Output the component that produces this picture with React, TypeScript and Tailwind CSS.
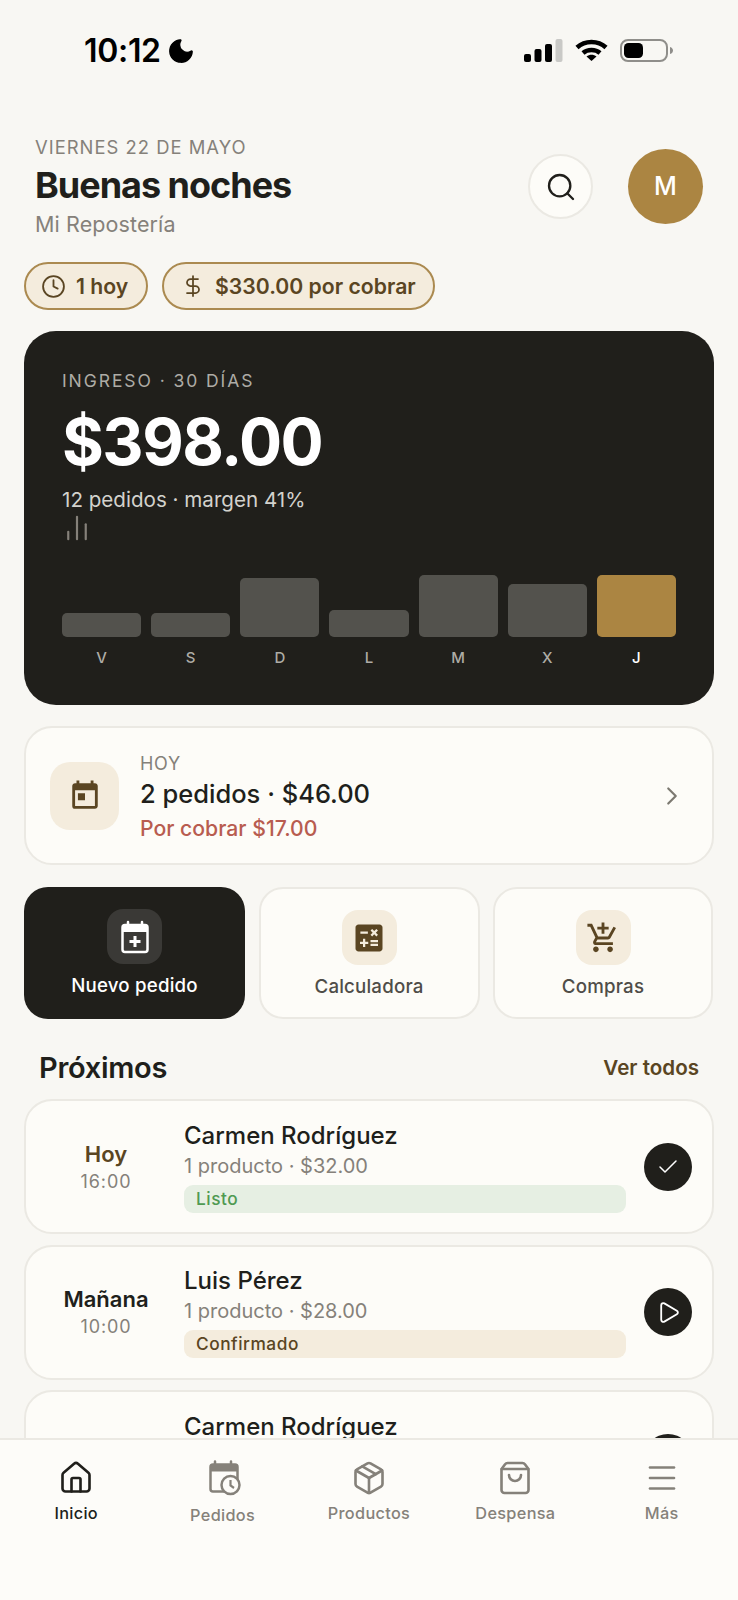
import React from "react";
import { Search, Clock, DollarSign, ChevronRight, Check, Play, House, Package, ShoppingBag, Menu, ChartNoAxesColumn, Moon } from "lucide-react";
import { MdToday, MdCalculate, MdOutlineAddShoppingCart } from "react-icons/md";

const bars = [
  { d: "V", h: "h-[24px]" },
  { d: "S", h: "h-[24px]" },
  { d: "D", h: "h-[59px]" },
  { d: "L", h: "h-[27px]" },
  { d: "M", h: "h-[62px]" },
  { d: "X", h: "h-[53px]" },
  { d: "J", h: "h-[62px]", on: true },
];

function StatusBar() {
  return (
    <div className="h-[100px] shrink-0 flex items-center justify-between pl-[84px] pr-[65px] text-black">
      <div className="flex items-center gap-[5px] mt-[1px]">
        <span className="text-[32px] leading-[38px] font-semibold tracking-[-0.01em]">10:12</span>
        <Moon size={30} fill="currentColor" strokeWidth={1} />
      </div>
      <div className="flex items-center gap-[12px]">
        <svg width="39" height="23" viewBox="0 0 39 23">
          <rect x="0" y="15" width="7" height="8" rx="2" fill="#000" />
          <rect x="10.5" y="10" width="7" height="13" rx="2" fill="#000" />
          <rect x="21" y="5" width="7" height="18" rx="2" fill="#000" />
          <rect x="31.5" y="0" width="7" height="23" rx="2" fill="#c9c9c6" />
        </svg>
        <svg width="33" height="22" viewBox="0 0 33 22" fill="none" stroke="#000" strokeWidth="4.500">
          <path d="M2 8.500C10 1 23 1 31 8.500" />
          <path d="M8 14C12.500 10 20.500 10 25 14" />
          <path d="M16.500 22L11.500 17.500C14.500 15 18.500 15 21.500 17.500Z" fill="#000" stroke="none" />
        </svg>
        <svg width="53" height="23" viewBox="0 0 53 23" fill="none">
          <rect x="1" y="1" width="46" height="21" rx="7" stroke="#8f8e8a" strokeWidth="2" />
          <rect x="4" y="4" width="19" height="15" rx="4.500" fill="#000" />
          <path d="M50 8C52 8.500 53 10 53 11.500C53 13 52 14.500 50 15Z" fill="#8f8e8a" />
        </svg>
      </div>
    </div>
  );
}

function CalendarPlusIcon() {
  return (
    <svg width="32" height="34" viewBox="0 0 32 34" fill="none">
      <path d="M9 2v5M23 2v5" stroke="#fff" strokeWidth="2.500" strokeLinecap="round" />
      <rect x="3.500" y="5" width="25" height="27" rx="2.500" stroke="#fff" strokeWidth="2.500" />
      <rect x="3.500" y="5" width="25" height="7" fill="#fff" />
      <path d="M16 16v11M10.500 21.500h11" stroke="#fff" strokeWidth="3" />
    </svg>
  );
}

function CalendarClockIcon() {
  return (
    <svg width="36" height="36" viewBox="0 0 36 36" fill="none">
      <path d="M10 1.500v4M26 1.500v4" stroke="#85817a" strokeWidth="2.500" strokeLinecap="round" />
      <rect x="5.500" y="4.500" width="27" height="27" rx="2.500" stroke="#85817a" strokeWidth="2.500" />
      <rect x="5.500" y="4.500" width="27" height="7" fill="#85817a" />
      <circle cx="25.500" cy="25" r="9" fill="#fdfcf9" stroke="#85817a" strokeWidth="2.500" />
      <path d="M25.500 20v5.500l3.500 2.500" stroke="#85817a" strokeWidth="2.200" />
    </svg>
  );
}

function Chip({ icon, label, className }: { icon: React.ReactNode; label: string; className: string }) {
  return (
    <div className={`h-[48px] flex items-center gap-[10px] rounded-full bg-[#f4ecdd] border-2 border-[#ab8a50] text-[#5a4522] ${className}`}>
      {icon}
      <span className="text-[21.200px] leading-[26px] font-semibold whitespace-nowrap">{label}</span>
    </div>
  );
}

function Action({ icon, label, dark }: { icon: React.ReactNode; label: string; dark?: boolean }) {
  return (
    <div className={`h-[132px] flex flex-col items-center pt-[21px] rounded-[24px] ${dark ? "bg-[#201f1b] pt-[22px]" : "bg-[#fdfcf8] border-2 border-[#ebe9e3]"}`}>
      <div className={`w-[55px] h-[55px] flex items-center justify-center rounded-[16px] ${dark ? "bg-[#3a3936]" : "bg-[#f4ecdd]"}`}>{icon}</div>
      <span className={`mt-[10px] text-[18.700px] leading-[24px] font-medium ${dark ? "text-white" : "text-[#4f4d48]"} tracking-[0.01em]`}>{label}</span>
    </div>
  );
}

function OrderCard({ day, dayColor, time, name, sub, tag, tagClass, icon, dayOffset = "" }: { day: string; dayColor: string; time: string; name: string; sub: string; tag: string; tagClass: string; icon: React.ReactNode; dayOffset?: string }) {
  return (
    <div className="h-[135px] shrink-0 flex items-center pr-[20px] rounded-[28px] bg-[#fdfcf8] border-2 border-[#ebe9e3]">
      <div className={`w-[158px] shrink-0 text-center pl-[2px] ${dayOffset}`}>
        <div className={`text-[22px] leading-[28px] font-semibold ${dayColor}`}>{day}</div>
        <div className="mt-[2px] text-[18px] leading-[24px] text-[#85817a] tracking-[0.05em]">{time}</div>
      </div>
      <div className="flex-1 min-w-0 flex flex-col">
        <div className="text-[24px] leading-[30px] font-medium text-[#201f1b]">{name}</div>
        <div className="mt-[2px] text-[20px] leading-[26px] text-[#85817a]">{sub}</div>
        <div className={`mt-[6px] h-[28px] flex items-center pl-[12px] rounded-[9px] text-[17.300px] font-medium tracking-[0.03em] ${tagClass}`}>{tag}</div>
      </div>
      <div className="ml-[18px] w-[48px] h-[48px] shrink-0 flex items-center justify-center rounded-full bg-[#201f1b] text-white">{icon}</div>
    </div>
  );
}

function NavItem({ icon, label, active, low }: { icon: React.ReactNode; label: string; active?: boolean; low?: boolean }) {
  return (
    <div className={`flex flex-col items-center ${active ? "text-[#201f1b]" : "text-[#85817a]"}`}>
      <div className="h-[36px] flex items-center justify-center">{icon}</div>
      <span className={`${low ? "mt-[9px]" : "mt-[7px]"} text-[16.300px] leading-[20px] font-medium tracking-[0.02em]`}>{label}</span>
    </div>
  );
}

export default function App() {
  return (
    <div className="w-[738px] h-[1600px] flex flex-col overflow-hidden bg-[#f8f7f3] font-['Inter',sans-serif]">
      <div className="flex-1 min-h-0 overflow-hidden">
        <StatusBar />
        <div className="pt-[35px] pl-[35px] pr-[35px] flex items-center justify-between">
          <div>
            <div className="text-[18.400px] leading-[24px] text-[#85817a] tracking-[0.055em]">VIERNES 22 DE MAYO</div>
            <div className="mt-[4px] text-[36px] leading-[44px] font-bold text-[#201f1b] tracking-[-0.028em]">Buenas noches</div>
            <div className="mt-[4px] text-[21.500px] leading-[26px] text-[#85817a] tracking-[0.005em]">Mi Repostería</div>
          </div>
          <div className="flex items-center gap-[35px] mt-[1px]">
            <div className="w-[65px] h-[65px] flex items-center justify-center rounded-full bg-[#fdfcf8] border-2 border-[#ebe9e3] text-[#201f1b]">
              <Search size={32} strokeWidth={1.75} />
            </div>
            <div className="w-[75px] h-[75px] flex items-center justify-center rounded-full bg-[#ab8542] text-white text-[25px] font-medium">M</div>
          </div>
        </div>

        <div className="mt-[25px] mx-[24px] flex gap-[14px]">
          <Chip className="w-[124px] pl-[15px]" icon={<Clock size={25} strokeWidth={1.75} />} label="1 hoy" />
          <Chip className="w-[273px] pl-[17px]" icon={<DollarSign size={24} strokeWidth={1.75} />} label="$330.00 por cobrar" />
        </div>

        <div className="mt-[21px] mx-[24px] w-[690px] h-[374px] rounded-[32px] bg-[#201f1b] pt-[38px] pl-[38px] pr-[38px]">
          <div className="text-[17.500px] leading-[24px] text-[#aeaca6] tracking-[0.11em]">INGRESO · 30 DÍAS</div>
          <div className="mt-[13px] text-[64px] leading-[72px] font-bold text-white tracking-[-0.024em]">$398.00</div>
          <div className="mt-[9px] text-[20.600px] leading-[26px] text-[#d3d2cd]">12 pedidos · margen 41%</div>
          <div className="h-[28px] text-[#85817a]">
            <ChartNoAxesColumn size={30} strokeWidth={1.75} />
          </div>
          <div className="mt-[34px] grid grid-cols-7 gap-x-[10px]">
            {bars.map((b) => (
              <div key={b.d} className="flex flex-col items-stretch">
                <div className="h-[62px] flex items-end">
                  <div className={`w-full ${b.h} rounded-[5px] ${b.on ? "bg-[#ab8542]" : "bg-[#53524d]"}`} />
                </div>
                <div className={`mt-[11px] text-center text-[15px] leading-[20px] font-medium ${b.on ? "text-white" : "text-[#aeaca6]"}`}>{b.d}</div>
              </div>
            ))}
          </div>
        </div>

        <div className="mt-[21px] mx-[24px] h-[139px] flex items-center rounded-[28px] bg-[#fdfcf8] border-2 border-[#ebe9e3] pl-[24px] pr-[25px]">
          <div className="w-[69px] h-[68px] shrink-0 flex items-center justify-center rounded-[20px] bg-[#f4ecdd] text-[#5a4522]">
            <MdToday size={34} />
          </div>
          <div className="ml-[21px] pt-[1px] flex-1 flex flex-col">
            <div className="text-[18px] leading-[22px] text-[#85817a] tracking-[0.04em]">HOY</div>
            <div className="mt-[3px] text-[25.500px] leading-[32px] font-medium text-[#201f1b]">2 pedidos · $46.00</div>
            <div className="mt-[6px] text-[21.200px] leading-[24px] font-medium text-[#b85c50]">Por cobrar $17.00</div>
          </div>
          <ChevronRight size={30} strokeWidth={1.75} className="text-[#7c7971]" />
        </div>

        <div className="mt-[22px] mx-[24px] grid grid-cols-[221px_221px_220px] gap-x-[13.500px]">
          <Action dark label="Nuevo pedido" icon={<CalendarPlusIcon />} />
          <Action label="Calculadora" icon={<MdCalculate size={36} className="text-[#5a4522]" />} />
          <Action label="Compras" icon={<MdOutlineAddShoppingCart size={34} className="text-[#5a4522]" />} />
        </div>

        <div className="mt-[32px] mx-[39px] flex items-center justify-between">
          <span className="text-[29px] leading-[34px] font-semibold text-[#201f1b] tracking-[-0.01em]">Próximos</span>
          <span className="text-[20.600px] leading-[26px] font-semibold text-[#5a4522]">Ver todos</span>
        </div>

        <div className="mt-[14px] mx-[24px] flex flex-col gap-[10.500px]">
          <OrderCard day="Hoy" dayColor="text-[#5a4522]" time="16:00" name="Carmen Rodríguez" sub="1 producto · $32.00" tag="Listo" tagClass="bg-[#e6efe3] text-[#4f9a52]" icon={<Check size={24} strokeWidth={1.5} />} />
          <OrderCard day="Mañana" dayColor="text-[#201f1b]" time="10:00" name="Luis Pérez" sub="1 producto · $28.00" tag="Confirmado" tagClass="bg-[#f4ecdd] text-[#5a4522]" icon={<Play size={25} strokeWidth={1.75} />} />
          <OrderCard dayOffset="pt-[4px]" day="Miércoles" dayColor="text-[#201f1b]" time="09:00" name="Carmen Rodríguez" sub="1 producto · $18.00" tag="Confirmado" tagClass="bg-[#f4ecdd] text-[#5a4522]" icon={<Play size={25} strokeWidth={1.75} />} />
        </div>
      </div>

      <nav className="h-[162px] shrink-0 bg-[#fdfcf9] border-t-2 border-[#ebe9e3] pt-[20px] px-[3px] grid grid-cols-5 content-start">
        <NavItem active label="Inicio" icon={<House size={36} strokeWidth={1.75} />} />
        <NavItem low label="Pedidos" icon={<CalendarClockIcon />} />
        <NavItem label="Productos" icon={<Package size={36} strokeWidth={1.75} />} />
        <NavItem label="Despensa" icon={<ShoppingBag size={36} strokeWidth={1.75} />} />
        <NavItem label="Más" icon={<Menu size={36} strokeWidth={1.75} />} />
      </nav>
    </div>
  );
}
